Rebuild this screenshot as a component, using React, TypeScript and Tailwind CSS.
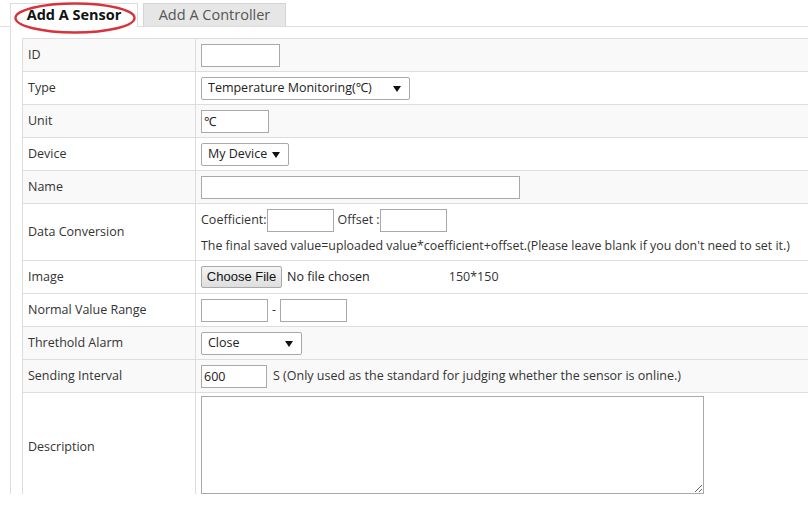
import React from "react";

const font = { fontFamily: '"Open Sans", "Noto Sans", Arial, sans-serif' };

function Caret() {
  return (
    <svg width="8" height="6" viewBox="0 0 8 6" className="pointer-events-none absolute right-[9px] top-[9px]">
      <path d="M0 0h8L4 6z" fill="#111" />
    </svg>
  );
}

function Select({ value, w }: { value: string; w: string }) {
  return (
    <div className={`relative h-[23px] ${w}`}>
      <select
        defaultValue={value}
        className="h-full w-full appearance-none rounded-[2px] border border-[#a9a9a9] bg-white pl-[6px] text-[12.5px] text-[#222] outline-none"
      >
        <option>{value}</option>
      </select>
      <Caret />
    </div>
  );
}

function Input({ w, value }: { w: string; value?: string }) {
  return (
    <input
      defaultValue={value}
      className={`h-[23px] ${w} border border-[#a9a9a9] bg-white px-[2px] text-[12.5px] text-[#222] outline-none`}
    />
  );
}

type Row = { label: string; h: string; bg: boolean; content: React.ReactNode };

const rows: Row[] = [
  { label: "ID", h: "h-[33px]", bg: true, content: <Input w="w-[79px]" /> },
  { label: "Type", h: "h-[33px]", bg: false, content: <Select value="Temperature Monitoring(℃)" w="w-[209px]" /> },
  { label: "Unit", h: "h-[33px]", bg: true, content: <Input w="w-[68px]" value="℃" /> },
  { label: "Device", h: "h-[33px]", bg: false, content: <Select value="My Device" w="w-[88px]" /> },
  { label: "Name", h: "h-[33px]", bg: true, content: <Input w="w-[319px]" /> },
  {
    label: "Data Conversion",
    h: "h-[57px]",
    bg: false,
    content: (
      <div className="flex flex-col gap-[5px]">
        <div className="flex items-center">
          <span>Coefficient:</span>
          <Input w="w-[67px]" />
          <span className="ml-[4px]">Offset :</span>
          <Input w="w-[67px]" />
        </div>
        <span className="whitespace-nowrap text-[12.4px]">
          The final saved value=uploaded value*coefficient+offset.(Please leave blank if you don't need to set it.)
        </span>
      </div>
    ),
  },
  {
    label: "Image",
    h: "h-[33px]",
    bg: false,
    content: (
      <div className="flex items-center">
        <button
          className="h-[22px] w-[81px] rounded-[2px] border border-[#a9a9a9] bg-gradient-to-b from-[#f4f4f4] to-[#dedede] text-[13px] text-[#111]"
          style={{ fontFamily: '"Liberation Sans", Arial, sans-serif' }}
        >
          Choose File
        </button>
        <span className="ml-[5px] text-[#222]">No file chosen</span>
        <span className="ml-[79px]">150*150</span>
      </div>
    ),
  },
  {
    label: "Normal Value Range",
    h: "h-[33px]",
    bg: false,
    content: (
      <div className="flex items-center">
        <Input w="w-[67px]" />
        <span className="mx-[4px]">-</span>
        <Input w="w-[67px]" />
      </div>
    ),
  },
  { label: "Threthold Alarm", h: "h-[33px]", bg: true, content: <Select value="Close" w="w-[101px]" /> },
  {
    label: "Sending Interval",
    h: "h-[33px]",
    bg: true,
    content: (
      <div className="flex items-center">
        <Input w="w-[66px]" value="600" />
        <span className="ml-[6px]">S (Only used as the standard for judging whether the sensor is online.)</span>
      </div>
    ),
  },
  {
    label: "Description",
    h: "h-[110px]",
    bg: false,
    content: <textarea className="mt-[3px] block h-[98px] w-[503px] resize border border-[#a9a9a9] bg-white outline-none" />,
  },
];

export default function App() {
  return (
    <div className="h-[507px] w-[808px] overflow-hidden bg-white text-[12.5px] text-[#333]" style={font}>
      <div className="h-[494px] overflow-hidden">
        <div className="flex items-end gap-[5px] border-b border-[#ddd] pl-[10px] pt-[3px]">
          <div className="relative -mb-px flex h-[24px] w-[128px] items-center justify-center border border-b-0 border-[#ddd] bg-white pb-px text-[14.5px] font-bold text-[#111]">
            Add A Sensor
            <svg className="pointer-events-none absolute left-[1px] top-[-3px]" width="126" height="35" viewBox="0 0 126 35">
              <ellipse cx="63" cy="17" rx="59.5" ry="14.5" fill="none" stroke="#d8323a" strokeWidth="2.4" />
            </svg>
          </div>
          <div className="flex h-[23px] w-[143px] items-center justify-center border border-b-0 border-[#d5d5d5] bg-[#e6e6e6] text-[14.5px] text-[#555]">
            Add A Controller
          </div>
        </div>
        <div className="ml-[10px] h-full border-l border-[#ddd] pl-[11px] pt-[11px]">
          <div className="border-l border-t border-[#ddd]">
            {rows.map((r) => (
              <div
                key={r.label}
                className={`grid grid-cols-[173px_1fr] border-b border-[#ddd] ${r.h} ${r.bg ? "bg-[#f9f9f9]" : "bg-white"}`}
              >
                <div className="flex items-center border-r border-[#ddd] pl-[5px]">{r.label}</div>
                <div className={`flex pl-[5px] ${r.label === "Description" ? "items-start" : "items-center"}`}>
                  {r.content}
                </div>
              </div>
            ))}
          </div>
        </div>
      </div>
    </div>
  );
}
